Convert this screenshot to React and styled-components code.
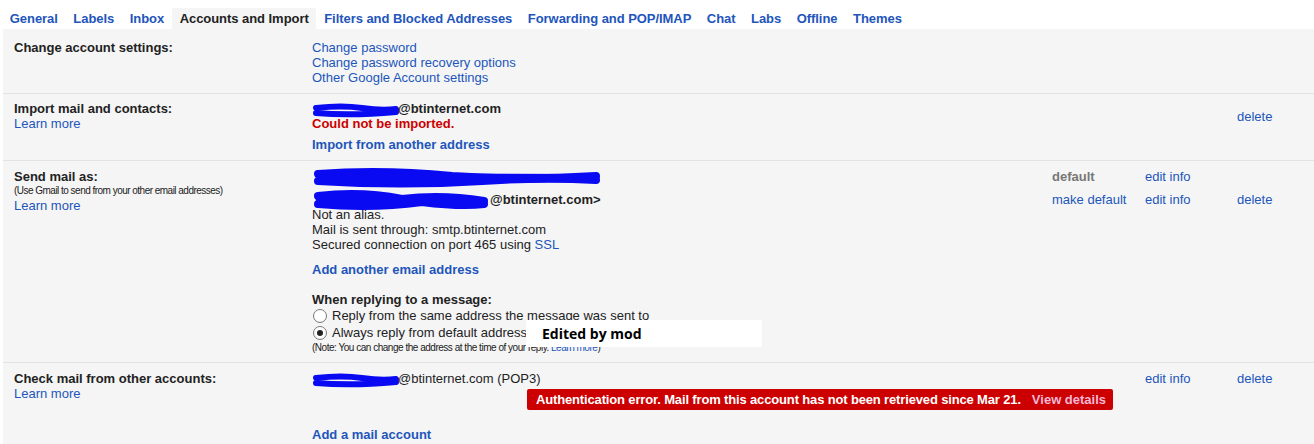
import React from 'react';
import styled, { createGlobalStyle } from 'styled-components';

const GlobalStyle = createGlobalStyle`
  html, body {
    margin: 0;
    padding: 0;
    background: #fff;
  }
  body {
    font-family: "Liberation Sans", Arial, sans-serif;
    font-size: 13px;
    color: #222;
  }
`;

const BLUE = '#2255bb';

const Page = styled.div`
  padding: 8px 0 0 2px;
`;

const Tabs = styled.div`
  display: flex;
  height: 21px;
`;

const Tab = styled.a`
  padding: 0 7.75px;
  line-height: 21px;
  font-weight: bold;
  text-decoration: none;
  white-space: nowrap;
  letter-spacing: -0.05px;
  color: ${p => (p.$active ? '#222' : BLUE)};
  background: ${p => (p.$active ? '#f5f5f5' : 'transparent')};
`;

const Panel = styled.div`
  margin-left: 1px;
  background: #f5f5f5;
`;

const Section = styled.div`
  display: grid;
  grid-template-columns: 298px 1fr;
  padding: ${p => p.$pad || '7px 0 8px 11px'};
  line-height: 15px;
  border-bottom: ${p => (p.$last ? 'none' : '1px solid #e3e3e3')};
`;

const Label = styled.div`
  font-weight: bold;
  color: #222;
`;

const Hint = styled.div`
  font-size: 10px;
  line-height: 14px;
  letter-spacing: -0.52px;
  color: #222;
`;

const Link = styled.a`
  display: ${p => (p.$inline ? 'inline' : 'block')};
  color: ${BLUE};
  text-decoration: none;
  font-weight: ${p => (p.$bold ? 'bold' : 'normal')};
  margin-top: ${p => p.$top || 0}px;
  cursor: pointer;
`;

const Content = styled.div`
  min-width: 0;
`;

const AccountRow = styled.div`
  display: flex;
  align-items: ${p => p.$align || 'flex-start'};
  margin-top: ${p => p.$top || 0}px;
`;

const Main = styled.div`
  flex: 1;
  min-width: 0;
`;

const Action = styled.div`
  width: ${p => p.$w}px;
  flex: none;
  color: ${p => (p.$muted ? '#777' : BLUE)};
  font-weight: ${p => (p.$muted ? 'bold' : 'normal')};
`;

const Email = styled.div`
  height: 15px;
  font-weight: ${p => (p.$bold ? 'bold' : 'normal')};
  white-space: nowrap;
`;

const ErrorText = styled.div`
  color: #cc0000;
  font-weight: bold;
`;

const Scribble = styled.svg`
  display: inline-block;
  vertical-align: middle;
  margin: -8px 0;
  overflow: visible;
`;

const ReplyBlock = styled.div`
  position: relative;
  margin-top: 15px;
`;

const Heading = styled.div`
  font-weight: bold;
`;

const RadioLine = styled.label`
  display: flex;
  align-items: center;
  gap: 5px;
  height: 17px;
`;

const Radio = styled.span`
  width: 12px;
  height: 12px;
  margin-left: 1px;
  border: 1px solid #7a7a7a;
  border-radius: 50%;
  background: radial-gradient(circle at 50% 40%, #fff 55%, #e6e6e6);
  position: relative;
  flex: none;

  &::after {
    content: '';
    display: ${p => (p.$checked ? 'block' : 'none')};
    position: absolute;
    left: 3px;
    top: 3px;
    width: 6px;
    height: 6px;
    border-radius: 50%;
    background: #222;
  }
`;

const Note = styled.div`
  font-size: 10px;
  line-height: 14px;
  letter-spacing: -0.48px;
  color: #222;
`;

const ModNotice = styled.div`
  position: absolute;
  left: 214px;
  top: 28px;
  width: 220px;
  height: 27px;
  padding-left: 16px;
  background: #fff;
  font-family: "Open Sans", "Noto Sans", sans-serif;
  font-weight: bold;
  font-size: 14px;
  line-height: 27px;
  color: #000;
`;

const Banner = styled.div`
  width: max-content;
  margin: 3px 0 0 215px;
  height: 21px;
  line-height: 21px;
  padding: 0 7px 0 9px;
  background: #cc0000;
  border-radius: 2px;
  color: #fff;
  font-weight: bold;
  letter-spacing: -0.15px;
  white-space: nowrap;
`;

const BannerLink = styled.span`
  margin-left: 11px;
  letter-spacing: 0;
  color: #f5b8d6;
`;

const strokes = {
  short: ['M4 5 Q30 2 50 5 T84 6', 'M4 10 Q40 13 84 9'],
  long: ['M6 6 Q70 1 140 8 Q210 13 284 8', 'M6 13 Q90 18 170 13 Q230 9 284 12', 'M10 9 L280 10'],
  mid: ['M6 6 Q50 1 90 9 Q130 4 172 11', 'M6 14 Q60 19 110 12 Q150 17 172 14', 'M8 10 L170 11']
};

const Redacted = ({ w, h, kind }) => (
  <Scribble width={w} height={h} viewBox={`0 0 ${w} ${h}`}>
    {strokes[kind].map((d, i) => (
      <path key={i} d={d} fill="none" stroke="#0a0af2" strokeWidth={h > 16 ? 8 : 6} strokeLinecap="round" />
    ))}
  </Scribble>
);

const tabs = [
  'General',
  'Labels',
  'Inbox',
  'Accounts and Import',
  'Filters and Blocked Addresses',
  'Forwarding and POP/IMAP',
  'Chat',
  'Labs',
  'Offline',
  'Themes'
];

export default function App() {
  return (
    <>
      <GlobalStyle />
      <Page>
        <Tabs>
          {tabs.map(t => (
            <Tab key={t} $active={t === 'Accounts and Import'}>
              {t}
            </Tab>
          ))}
        </Tabs>
        <Panel>
          <Section $pad="11px 0 8px 11px">
            <Label>Change account settings:</Label>
            <Content>
              <Link>Change password</Link>
              <Link>Change password recovery options</Link>
              <Link>Other Google Account settings</Link>
            </Content>
          </Section>

          <Section>
            <div>
              <Label>Import mail and contacts:</Label>
              <Link>Learn more</Link>
            </div>
            <Content>
              <AccountRow $align="center">
                <Main>
                  <Email $bold>
                    <Redacted w={86} h={14} kind="short" />
                    @btinternet.com
                  </Email>
                  <ErrorText>Could not be imported.</ErrorText>
                </Main>
                <Action $w={93} />
                <Action $w={92} />
                <Action $w={77}>delete</Action>
              </AccountRow>
              <Link $bold $top={6}>Import from another address</Link>
            </Content>
          </Section>

          <Section $pad="8px 0 7px 11px">
            <div>
              <Label>Send mail as:</Label>
              <Hint>(Use Gmail to send from your other email addresses)</Hint>
              <Link>Learn more</Link>
            </div>
            <Content>
              <AccountRow>
                <Main>
                  <Email $bold>
                    <Redacted w={290} h={20} kind="long" />
                  </Email>
                </Main>
                <Action $w={93} $muted>default</Action>
                <Action $w={92}>edit info</Action>
                <Action $w={77} />
              </AccountRow>
              <AccountRow $top={8}>
                <Main>
                  <Email $bold>
                    <Redacted w={178} h={22} kind="mid" />
                    @btinternet.com&gt;
                  </Email>
                  <div>Not an alias.</div>
                  <div>Mail is sent through: smtp.btinternet.com</div>
                  <div>
                    Secured connection on port 465 using <Link $inline>SSL</Link>
                  </div>
                </Main>
                <Action $w={93}>make default</Action>
                <Action $w={92}>edit info</Action>
                <Action $w={77}>delete</Action>
              </AccountRow>
              <Link $bold $top={10}>Add another email address</Link>
              <ReplyBlock>
                <Heading>When replying to a message:</Heading>
                <RadioLine>
                  <Radio />
                  Reply from the same address the message was sent to
                </RadioLine>
                <RadioLine>
                  <Radio $checked />
                  Always reply from default address
                </RadioLine>
                <Note>
                  (Note: You can change the address at the time of your reply. <Link $inline>Learn more</Link>)
                </Note>
                <ModNotice>Edited by mod</ModNotice>
              </ReplyBlock>
            </Content>
          </Section>

          <Section $last $pad="8px 0 8px 11px">
            <div>
              <Label>Check mail from other accounts:</Label>
              <Link>Learn more</Link>
            </div>
            <Content>
              <AccountRow>
                <Main>
                  <Email>
                    <Redacted w={86} h={14} kind="short" />
                    @btinternet.com (POP3)
                  </Email>
                  <Banner>
                    Authentication error. Mail from this account has not been retrieved since Mar 21.
                    <BannerLink>View details</BannerLink>
                  </Banner>
                </Main>
                <Action $w={93} />
                <Action $w={92}>edit info</Action>
                <Action $w={77}>delete</Action>
              </AccountRow>
              <Link $bold $top={17}>Add a mail account</Link>
            </Content>
          </Section>
        </Panel>
      </Page>
    </>
  );
}
